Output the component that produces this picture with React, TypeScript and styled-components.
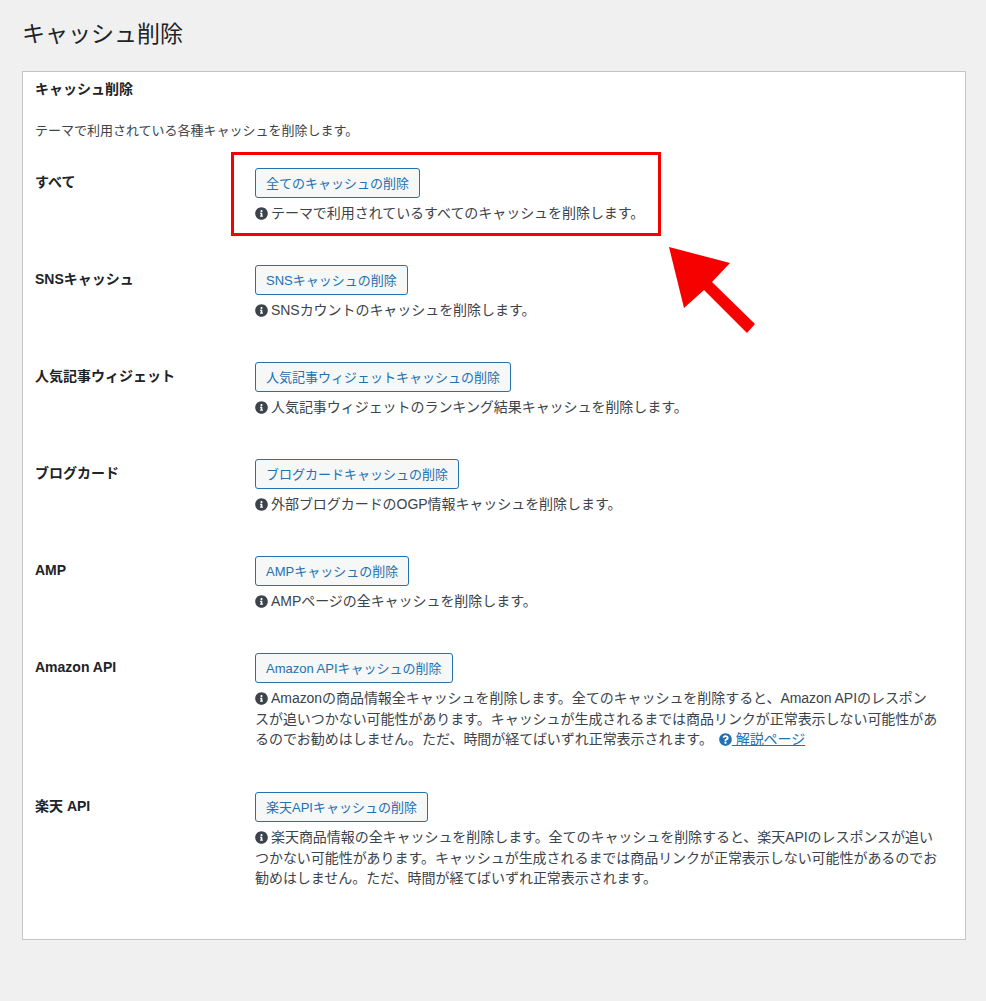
import React, { FC, ReactNode } from 'react'
import styled, { createGlobalStyle } from 'styled-components'
import { FaInfoCircle, FaQuestionCircle } from 'react-icons/fa'

const GlobalStyle = createGlobalStyle`
  html, body {
    margin: 0;
    padding: 0;
    background: #f0f0f1;
    overflow: hidden;
  }
  body {
    font-family: "Liberation Sans", "Noto Sans CJK JP", sans-serif;
    color: #3c434a;
    font-size: 13px;
  }
`

const Page = styled.div`
  position: relative;
  height: 1001px;
  padding: 0 20px 0 22px;
  box-sizing: border-box;
`

const Title = styled.h1`
  margin: 0;
  padding: 18px 0 0;
  height: 71px;
  box-sizing: border-box;
  font-size: 23px;
  font-weight: 400;
  line-height: 32px;
  color: #1d2327;
`

const Panel = styled.div`
  height: 869px;
  box-sizing: border-box;
  padding: 7px 12px 0;
  background: #fff;
  border: 1px solid #c3c4c7;
`

const PanelTitle = styled.h2`
  margin: 0;
  font-size: 14px;
  font-weight: 700;
  line-height: 20px;
  color: #1d2327;
`

const Lead = styled.p`
  margin: 22px 0 12px;
  font-size: 13px;
  line-height: 20px;
`

const Row = styled.div`
  display: grid;
  grid-template-columns: 220px 1fr;
  padding: 15px 0 0;
  min-height: ${(p: { $height: number }) => p.$height}px;
  box-sizing: border-box;
`

const Label = styled.div`
  padding-top: 4px;
  font-size: 14px;
  font-weight: 700;
  line-height: 20px;
  color: #1d2327;
`

const Button = styled.button`
  display: block;
  height: 30px;
  margin: 0 0 5px;
  padding: 0 10px 2px;
  box-sizing: border-box;
  font: inherit;
  font-size: 13px;
  color: #2271b1;
  background: #f6f7f7;
  border: 1px solid #2271b1;
  border-radius: 3px;
`

const Note = styled.div`
  max-width: 684px;
  font-size: 14px;
  letter-spacing: -0.05px;
  line-height: 20.5px;
  color: #3c434a;
  svg {
    width: 13px;
    height: 13px;
    margin-right: 3px;
    vertical-align: -1.5px;
  }
`

const HelpIcon = styled(FaQuestionCircle)`
  && {
    margin: 0 0 0 6px;
    color: #2271b1;
  }
`

const HelpLink = styled.a`
  color: #2271b1;
  text-decoration: underline;
`

const Highlight = styled.div`
  position: absolute;
  left: 231px;
  top: 152px;
  width: 430px;
  height: 84px;
  box-sizing: border-box;
  border: 3px solid #f60000;
`

const Arrow = styled.svg`
  position: absolute;
  left: 660px;
  top: 240px;
  width: 100px;
  height: 100px;
`

interface SettingRow {
  label: string
  button: string
  height: number
  note: ReactNode
}

const rows: SettingRow[] = [
  {
    label: 'すべて',
    button: '全てのキャッシュの削除',
    height: 97,
    note: 'テーマで利用されているすべてのキャッシュを削除します。',
  },
  {
    label: 'SNSキャッシュ',
    button: 'SNSキャッシュの削除',
    height: 97,
    note: 'SNSカウントのキャッシュを削除します。',
  },
  {
    label: '人気記事ウィジェット',
    button: '人気記事ウィジェットキャッシュの削除',
    height: 97,
    note: '人気記事ウィジェットのランキング結果キャッシュを削除します。',
  },
  {
    label: 'ブログカード',
    button: 'ブログカードキャッシュの削除',
    height: 97,
    note: '外部ブログカードのOGP情報キャッシュを削除します。',
  },
  {
    label: 'AMP',
    button: 'AMPキャッシュの削除',
    height: 97,
    note: 'AMPページの全キャッシュを削除します。',
  },
  {
    label: 'Amazon API',
    button: 'Amazon APIキャッシュの削除',
    height: 139,
    note: (
      <>
        Amazonの商品情報全キャッシュを削除します。全てのキャッシュを削除すると、Amazon APIのレスポンスが追いつかない可能性があります。キャッシュが生成されるまでは商品リンクが正常表示しない可能性があるのでお勧めはしません。ただ、時間が経てばいずれ正常表示されます。
        <HelpIcon />
        <HelpLink href="#"> 解説ページ</HelpLink>
      </>
    ),
  },
  {
    label: '楽天 API',
    button: '楽天APIキャッシュの削除',
    height: 139,
    note: '楽天商品情報の全キャッシュを削除します。全てのキャッシュを削除すると、楽天APIのレスポンスが追いつかない可能性があります。キャッシュが生成されるまでは商品リンクが正常表示しない可能性があるのでお勧めはしません。ただ、時間が経てばいずれ正常表示されます。',
  },
]

const App: FC = () => (
  <Page>
    <GlobalStyle />
    <Title>キャッシュ削除</Title>
    <Panel>
      <PanelTitle>キャッシュ削除</PanelTitle>
      <Lead>テーマで利用されている各種キャッシュを削除します。</Lead>
      {rows.map((row) => (
        <Row key={row.label} $height={row.height}>
          <Label>{row.label}</Label>
          <div>
            <Button type="button">{row.button}</Button>
            <Note>
              <FaInfoCircle />
              {row.note}
            </Note>
          </div>
        </Row>
      ))}
    </Panel>
    <Highlight />
    <Arrow viewBox="0 0 100 100">
      <polygon
        points="9,7 70,23 52,42 95,84 87,93 44,50 24,68"
        fill="#f60000"
      />
    </Arrow>
  </Page>
)

export default App
